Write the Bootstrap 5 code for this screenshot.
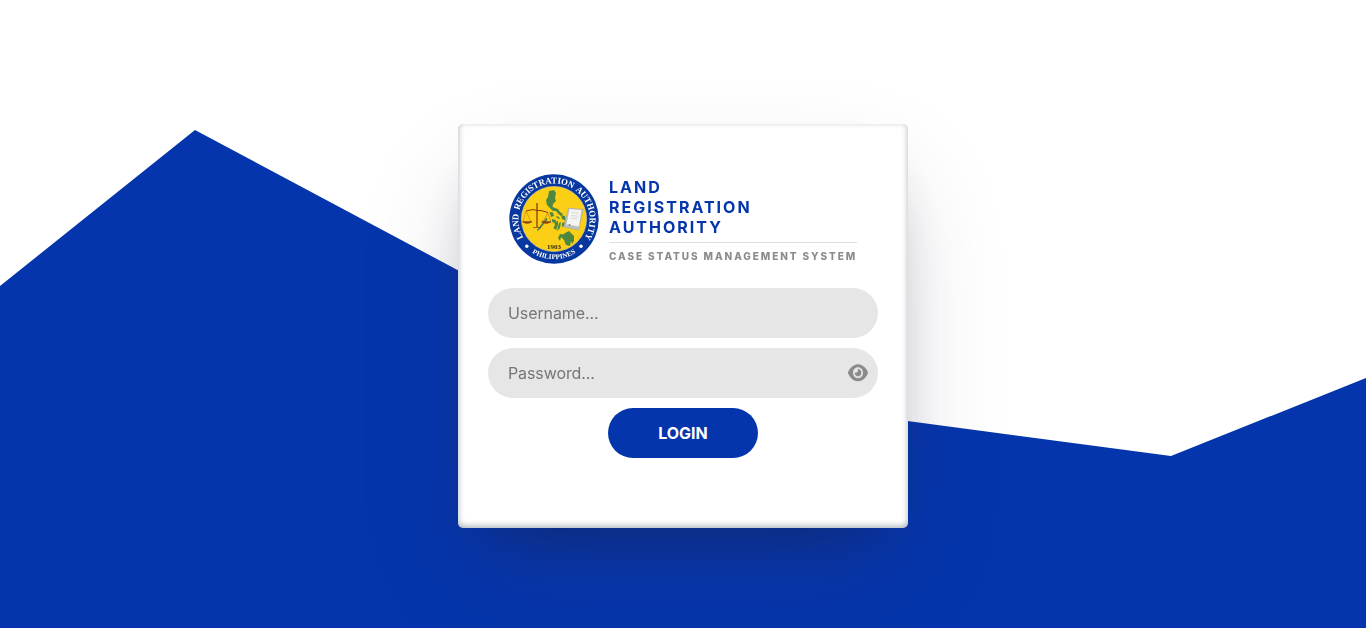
<!DOCTYPE html>
<html lang="en">
<head>
<meta charset="utf-8">
<meta name="viewport" content="width=device-width, initial-scale=1">
<title>LRA Case Status Management System</title>
<link href="https://cdn.jsdelivr.net/npm/bootstrap@5.3.0/dist/css/bootstrap.min.css" rel="stylesheet">
<style>
  :root { --lra-blue: #0535ac; }
  body { font-family: Inter, "Liberation Sans", sans-serif; background: #fff; }
  .login-page { padding-top: 24px; }
  .hills { z-index: -1; }
  .login-card {
    width: 450px; height: 404px; padding: 50px 30px 30px;
    border: 0; border-radius: 5px; background: #fff;
    box-shadow: rgba(50,50,93,.25) 0 50px 100px -20px, rgba(0,0,0,.3) 0 30px 60px -30px, rgba(10,37,64,.35) 0 -2px 6px 0 inset;
  }
  .brand-row { height: 90px; margin: 0 20px 24px 21px; gap: 10px; }
  .agency { font-size: 16px; line-height: 20px; font-weight: 700; letter-spacing: 2px; color: var(--lra-blue); width: 248px; padding: 3px 0 5px; border-bottom: 1px solid #dedede; }
  .system { font-size: 10px; line-height: 14px; font-weight: 800; letter-spacing: 1.92px; color: #8b8b8b; margin-top: 6px; white-space: nowrap; }
  .login-field.form-control { height: 50px; padding: 0 20px; border: 0; background: #e6e6e6; font-size: 16px; letter-spacing: -.1px; color: #333; }
  .login-field::placeholder { color: #757575; }
  .show-pass { right: 10px; top: 14.7px; width: 20px; height: 19.5px; }
  .login-btn.btn { width: 150px; height: 50px; background: var(--lra-blue); color: #fff; border: 0; font-size: 16px; font-weight: 700; }
</style>
</head>
<body class="overflow-hidden">
<svg class="hills position-fixed top-0 start-0 w-100 h-100" viewBox="0 0 1366 628" preserveAspectRatio="none" aria-hidden="true">
  <path fill="#0535ac" d="M0 286L195 130L585 338L780 404L1171 456L1366 378V628H0Z"/>
</svg>
<main class="login-page d-flex align-items-center justify-content-center vh-100">
  <form class="card login-card">
    <div class="brand-row d-flex">
      <svg class="flex-shrink-0" width="90" height="90" viewBox="5 6 90 90" role="img" aria-label="Land Registration Authority seal">
        <defs>
          <path id="topArc" d="M19.4 69.500A35.700 35.700 0 1 1 80.600 69.500"/>
          <path id="bottomArc" d="M20 78A40.800 40.800 0 0 0 80 78"/>
        </defs>
        <circle cx="50" cy="51" r="44.7" fill="#07389f"/>
        <circle cx="50" cy="51" r="32.6" fill="#fccf17" stroke="#d8cf9c" stroke-width=".6"/>
        <g fill="#fff" font-family="Liberation Serif, serif" font-weight="700">
          <text font-size="9" word-spacing="1.5"><textPath href="#topArc" startOffset="0" textLength="151" lengthAdjust="spacingAndGlyphs">LAND REGISTRATION AUTHORITY</textPath></text>
          <text font-size="6.9"><textPath href="#bottomArc" startOffset="50%" text-anchor="middle" textLength="46" lengthAdjust="spacingAndGlyphs">PHILIPPINES</textPath></text>
        </g>
        <circle cx="22.8" cy="78.2" r="1.7" fill="#fff"/>
        <circle cx="77" cy="78.2" r="1.7" fill="#fff"/>
        <!-- archipelago -->
        <g fill="#4d8740">
          <path d="M45 23L50 22L52 25L51 30L52 33L49 36L48.500 39L51 40L54 41L56 44L59 46L57 48L54 45.500L52 43L49 43L46 40L43 37L42 32L44 29Z"/>
          <path d="M45.500 44L49 44.500L50 48L47 49Z M52 48l3 1 1 2-3-1z M48 51l4 1-1 3-3-1z"/>
          <path d="M42.500 49.500L43.500 51.500L36 61L33.500 63L33 62Z"/>
          <path d="M50 54L54 53L54 57L52 62L49.500 60L51 57Z M55 55l2-1-1 6-3 3z M57 47l4 1 1 5-4-2z M58 55l3-1-1 4-2 1z"/>
          <path d="M54 70L56 66L59 66.500L62 64.500L65 63L68 66L70 68L70 73L68 76L67 73L66 78L62 77L60 72L57 69L56 73Z"/>
        </g>
        <!-- scales of justice -->
        <g fill="none" stroke="#8b3a18">
          <path stroke-width="1.300" d="M33 35V59"/>
          <path stroke-width="1" d="M22 43L29 41.500Q33 43 37 42.500L44 44.500"/>
          <path stroke-width=".35" d="M22 43L19 54M22 43L27 54M44 45L38.500 54M44 45L47 54"/>
          <path fill="#8b3d16" stroke-width=".7" d="M18.500 53.700H28Q23 57 18.500 53.700ZM37.500 53.700H47Q42.500 57 37.500 53.700ZM29 59.500H37"/>
        </g>
        <!-- land title -->
        <path d="M64.500 40L79 41.500L74.500 62L60 59Z" fill="#b9bfc2" stroke="#a6a99f" stroke-width=".6"/>
        <path d="M65.500 41L77.500 42L75 58.500L62.500 56.500Z" fill="#f4f4f1"/>
        <path d="M67.500 44.500L75 45.200M67 47.500L74.500 48.200M66.500 50L73.500 50.700" stroke="#c2c2be" stroke-width=".6"/>
        <circle cx="65.500" cy="57" r="1.100" fill="#8e9292"/>
        <text x="50" y="81" text-anchor="middle" font-family="Liberation Serif, serif" font-weight="700" font-size="7" fill="#302a14">1903</text>
      </svg>
      <div>
        <div class="agency">LAND<br>REGISTRATION<br>AUTHORITY</div>
        <div class="system">CASE STATUS MANAGEMENT SYSTEM</div>
      </div>
    </div>
    <div class="d-flex flex-column align-items-center" style="gap:10px">
      <input class="form-control rounded-pill login-field" type="text" placeholder="Username..." aria-label="Username">
      <div class="position-relative w-100">
        <input class="form-control rounded-pill login-field" type="password" placeholder="Password..." aria-label="Password">
        <svg class="show-pass position-absolute" viewBox="0 0 576 512" fill="#8b8b8b" preserveAspectRatio="none" aria-hidden="true">
          <path d="M279.6 160.400C282.400 160.100 285.200 160 288 160C341 160 384 202.100 384 256C384 309 341 352 288 352C234.100 352 192 309 192 256C192 253.200 192.100 250.400 192.400 247.600C201.700 252.100 212.500 256 224 256C259.300 256 288 227.300 288 192C288 180.500 284.100 169.700 279.600 160.400zM480.600 112.600C527.400 156 558.700 207.100 573.500 243.700C576.800 251.600 576.800 260.400 573.500 268.300C558.700 304 527.400 355.100 480.600 399.400C433.500 443.200 368.800 480 288 480C207.200 480 142.500 443.200 95.420 399.400C48.620 355.100 17.340 304 2.461 268.300C-.8205 260.400-.8205 251.600 2.461 243.700C17.340 207.100 48.620 156 95.420 112.600C142.500 68.840 207.200 32 288 32C368.800 32 433.500 68.840 480.600 112.600zM288 112C208.500 112 144 176.500 144 256C144 335.500 208.500 400 288 400C367.500 400 432 335.500 432 256C432 176.500 367.500 112 288 112z"/>
        </svg>
      </div>
      <button class="btn rounded-pill login-btn" type="button">LOGIN</button>
    </div>
  </form>
</main>
<script src="https://cdn.jsdelivr.net/npm/bootstrap@5.3.0/dist/js/bootstrap.bundle.min.js"></script>
</body>
</html>
